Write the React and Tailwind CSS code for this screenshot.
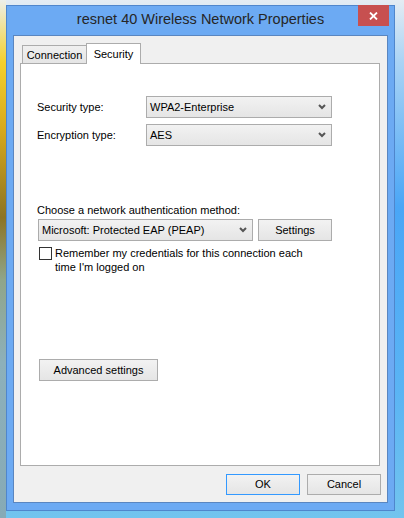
import React from 'react';

const FONT = "font-['Segoe_UI','Liberation_Sans',Arial,sans-serif]";

function Chevron() {
  return (
    <svg width="8" height="6" viewBox="0 0 8 6" className="shrink-0">
      <path d="M1 1 L4 4 L7 1" fill="none" stroke="#555" strokeWidth="2" />
    </svg>
  );
}

function Combo({ value, className = '' }) {
  return (
    <div
      className={`flex h-[22px] items-center justify-between border border-[#acacac] bg-[linear-gradient(to_bottom,#f2f2f2,#e5e5e5)] pl-[3px] pr-[5px] ${className}`}
    >
      <span>{value}</span>
      <Chevron />
    </div>
  );
}

function Button({ children, className = '', focused = false }) {
  return (
    <button
      className={`flex items-center justify-center border bg-[linear-gradient(to_bottom,#f2f2f2,#e5e5e5)] text-black ${
        focused ? 'border-[#3399ff]' : 'border-[#acacac]'
      } ${className}`}
    >
      {children}
    </button>
  );
}

export default function App() {
  return (
    <div
      className={`flex h-[518px] w-[404px] overflow-hidden bg-[linear-gradient(to_bottom,#e4ecf3_0%,#a9d3f5_12%,#4aa6f6_40%,#5ab4f4_75%,#72c4ee_100%)] text-[11px] text-black ${FONT}`}
    >
      <div className="w-[6px] shrink-0 bg-[linear-gradient(to_bottom,#eef0ea_0%,#f4d02c_12%,#d7a91c_25%,#8c7424_42%,#8fa58a_54%,#8db0ba_70%,#86aab6_100%)]" />

      <div className="flex w-[389px] shrink-0 flex-col pt-[5px]">
        <div className="flex h-[506px] flex-col border border-[#4f86cc] bg-[#6caaf3] px-[6px] pb-[7px]">
          {/* title bar */}
          <div className="relative flex h-[29px] items-center justify-center pb-[1px] text-[14.5px] text-[#262626]">
            <span>resnet 40 Wireless Network Properties</span>
            <div className="absolute right-[-1px] top-[-1px] flex h-[21px] w-[31px] items-center justify-center bg-[#c75050]">
              <svg width="9" height="8" viewBox="0 0 9 8">
                <path d="M1 0.5 L8 7.5 M8 0.5 L1 7.5" stroke="#fff" strokeWidth="1.8" />
              </svg>
            </div>
          </div>

          {/* client area */}
          <div className="flex flex-1 flex-col border border-[#5a86c0] bg-[#f0f0f0] pl-[6px] pr-[7px] pt-[7px]">
            <div className="flex h-[20px] items-end pl-[2px]">
              <div className="flex h-[18px] w-[65px] items-center justify-center border border-b-0 border-[#acacac] bg-[linear-gradient(to_bottom,#f0f0f0,#e5e5e5)] pt-[1px]">
                Connection
              </div>
              <div className="relative z-10 -mb-px -ml-px flex h-[21px] w-[55px] items-start justify-center border border-b-0 border-[#acacac] bg-white pt-[2px]">
                Security
              </div>
            </div>

            <div className="flex h-[403px] flex-col border border-[#acacac] bg-white pl-[16px] pt-[32px]">
              <div className="flex items-center">
                <span className="w-[109px]">Security type:</span>
                <Combo value="WPA2-Enterprise" className="w-[186px]" />
              </div>
              <div className="mt-[6px] flex items-center">
                <span className="w-[109px]">Encryption type:</span>
                <Combo value="AES" className="w-[186px]" />
              </div>

              <p className="mt-[57px] leading-[15px]">Choose a network authentication method:</p>
              <div className="ml-[1px] mt-[1px] flex">
                <Combo value="Microsoft: Protected EAP (PEAP)" className="w-[215px]" />
                <Button className="ml-[5px] h-[22px] w-[74px]">Settings</Button>
              </div>

              <div className="ml-[2px] mt-[5px] flex items-start">
                <div className="mt-[1px] h-[13px] w-[13px] shrink-0 border border-[#333] bg-white" />
                <p className="ml-[3px] leading-[14px]">
                  Remember my credentials for this connection each
                  <br />
                  time I'm logged on
                </p>
              </div>

              <Button className="ml-[2px] mt-[85px] h-[22px] w-[119px]">Advanced settings</Button>
            </div>

            <div className="-mr-px mt-[8px] flex justify-end gap-[7px]">
              <Button focused className="h-[21px] w-[74px]">
                OK
              </Button>
              <Button className="h-[21px] w-[74px]">Cancel</Button>
            </div>
          </div>
        </div>
      </div>
    </div>
  );
}
